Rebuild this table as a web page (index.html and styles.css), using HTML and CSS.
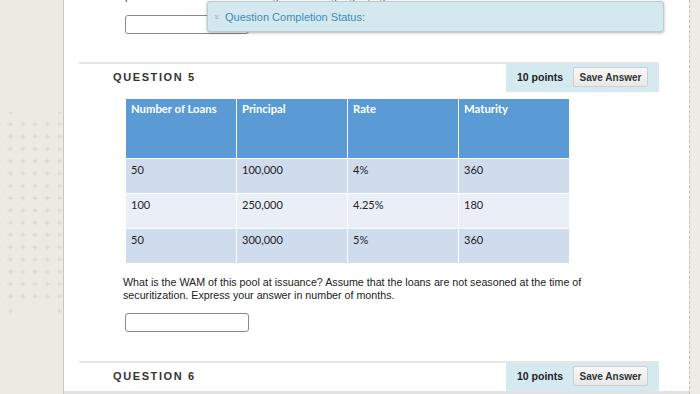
FILE: index.html
```html
<!DOCTYPE html>
<html>
<head>
<meta charset="utf-8">
<link rel="stylesheet" href="styles.css">
</head>
<body>
<div class="page">
  <aside class="sidebar">
    <svg class="dots" width="64" height="212" viewBox="0 0 64 212">
      <defs>
        <pattern id="plus" x="7.5" y="9.3" width="12.3" height="12.3" patternUnits="userSpaceOnUse">
          <path d="M3 0.5V5.5M0.5 3H5.5" stroke="#dcd8cf" stroke-width="1.1" fill="none"/>
        </pattern>
        <g id="p"><path d="M3 0.5V5.5M0.5 3H5.5" stroke="#dcd8cf" stroke-width="1.1" fill="none"/></g>
      </defs>
      <rect x="0" y="9.3" width="64" height="184.5" fill="url(#plus)"/>
      <use href="#p" x="7.5" y="-3"/>
      <use href="#p" x="56.7" y="-3"/>
      <use href="#p" x="7.5" y="196"/>
      <use href="#p" x="56.7" y="196"/>
    </svg>
  </aside>
  <main class="main">
    <div class="wrap">
      <div class="prev">
        <p class="prev-text">period is the average mortgage, g</p>
        <div class="input"></div>
      </div>

      <section class="question">
        <header class="qhead">
          <h2 class="qtitle">QUESTION 5</h2>
          <div class="qpoints">
            <span class="pts">10 points</span>
            <button class="save">Save Answer</button>
          </div>
        </header>
        <div class="qbody">
          <table class="loans">
            <thead>
              <tr><th>Number of Loans</th><th>Principal</th><th>Rate</th><th>Maturity</th></tr>
            </thead>
            <tbody>
              <tr class="odd"><td>50</td><td>100,000</td><td>4%</td><td>360</td></tr>
              <tr class="even"><td>100</td><td>250,000</td><td>4.25%</td><td>180</td></tr>
              <tr class="odd"><td>50</td><td>300,000</td><td>5%</td><td>360</td></tr>
            </tbody>
          </table>
          <p class="qtext">What is the WAM of this pool at issuance? Assume that the loans are not seasoned at the time of<br>securitization. Express your answer in number of months.</p>
          <div class="input"></div>
        </div>
      </section>

      <section class="question">
        <header class="qhead">
          <h2 class="qtitle">QUESTION 6</h2>
          <div class="qpoints">
            <span class="pts">10 points</span>
            <button class="save">Save Answer</button>
          </div>
        </header>
      </section>
    </div>
    <div class="footer-band"></div>

    <div class="status">
      <span class="chev">&raquo;</span>
      <span class="status-text">Question Completion Status:</span>
    </div>
  </main>
  <aside class="edge"></aside>
</div>
</body>
</html>
```

FILE: styles.css
```css
html, body {
  margin: 0;
  padding: 0;
  height: 394px;
  overflow: hidden;
}
body {
  font-family: "Liberation Sans", Arial, sans-serif;
  background: #e4e4e4;
}
.page {
  display: flex;
  height: 394px;
}
.sidebar {
  width: 63px;
  flex: none;
  background: #edeae3;
  border-right: 1px solid #c9c6bf;
  padding-top: 112px;
}
.dots {
  display: block;
}
.main {
  flex: 1;
  position: relative;
  background: #fff;
  overflow: hidden;
}
.edge {
  width: 10px;
  flex: none;
  background: #eeebe4;
  border-left: 1px dashed #c4c0b8;
}
.wrap {
  margin: 0 30px 0 15px;
  background: #fff;
}
.footer-band {
  height: 12px;
  background: #e2e2e2;
}
.prev {
  padding-left: 46px;
  padding-bottom: 28px;
}
.prev-text {
  margin: -10px 0 0 0;
  height: 13px;
  font-size: 11px;
  line-height: 13px;
  color: #444;
  letter-spacing: 3px;
}
.input {
  margin-top: 12px;
  width: 122px;
  height: 17px;
  border: 1px solid #8a8a8a;
  border-radius: 3px;
  background: #fff;
}
.question {
  border-top: 2px solid #e6e6e6;
  background: #fff;
}
.qhead {
  display: flex;
  height: 28px;
  align-items: stretch;
}
.qtitle {
  flex: 1;
  margin: 0;
  padding-left: 34px;
  font-size: 11px;
  font-weight: bold;
  letter-spacing: 1.6px;
  color: #333;
  line-height: 26px;
}
.qpoints {
  width: 153px;
  background: #d5e9f0;
  display: flex;
  align-items: center;
  padding-left: 11px;
  padding-bottom: 2px;
  box-sizing: border-box;
}
.pts {
  font-size: 10.5px;
  font-weight: bold;
  color: #222;
  width: 56px;
}
.save {
  width: 75px;
  height: 20px;
  padding: 0;
  border: 1px solid #cfcfcf;
  border-radius: 2px;
  background: linear-gradient(#f8f8f8, #e8e8e8);
  font-family: "Liberation Sans", Arial, sans-serif;
  font-size: 10px;
  font-weight: bold;
  color: #333;
}
.qbody {
  padding-left: 46px;
  padding-top: 6px;
  padding-bottom: 29px;
}
.loans {
  border-collapse: collapse;
  font-family: Lato, "Open Sans", sans-serif;
  font-size: 11px;
}
.loans th, .loans td {
  width: 111px;
  box-sizing: border-box;
  border: 1px solid #fff;
  text-align: left;
  vertical-align: top;
  padding: 3px 5px 0 5px;
}
.loans th {
  height: 60px;
  background: #5b9bd5;
  color: #fff;
  font-weight: bold;
  font-size: 11.3px;
}
.loans td {
  height: 35px;
  color: #222;
  padding-top: 4px;
}
.loans tr.odd td {
  background: #cfdcee;
}
.loans tr.even td {
  background: #e9eef7;
}
.qtext {
  margin: 12px 0 0 -2px;
  font-size: 10.7px;
  line-height: 13px;
  color: #222;
}
.qtext + .input {
  margin-top: 11px;
}
.status {
  position: absolute;
  left: 143px;
  top: 1px;
  width: 457px;
  height: 31px;
  box-sizing: border-box;
  background: #d4e9ef;
  border: 1px solid #b9ccd2;
  border-radius: 3px;
  box-shadow: 0 1px 3px rgba(0, 0, 0, 0.3);
  display: flex;
  align-items: center;
  padding-left: 6px;
}
.chev {
  display: inline-block;
  transform: rotate(90deg);
  font-size: 9px;
  color: #9aa;
  margin-right: 6px;
}
.status-text {
  font-size: 11px;
  color: #3a8db6;
}
```
